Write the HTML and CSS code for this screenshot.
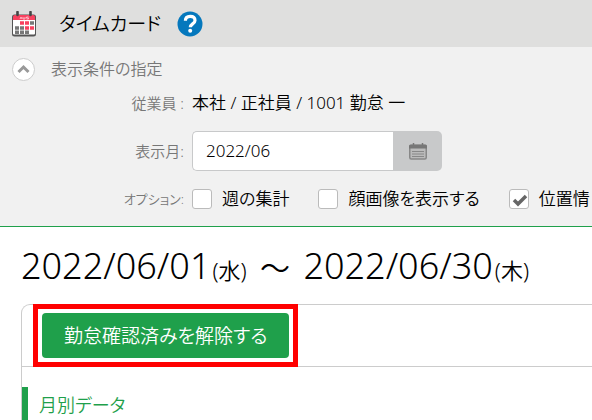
FILE: index.html
```html
<!DOCTYPE html>
<html lang="ja">

<head>
    <meta charset="UTF-8">
    <meta name="viewport" content="width=device-width, initial-scale=1.0">
    <title>タイムカード</title>
    <link rel="stylesheet" href="styles.css">
</head>

<body>

    <header class="header">
        <svg class="header-icon" viewBox="0 0 26 26" aria-hidden="true">
            <rect x="1" y="3.500" width="24" height="22" rx="2.500" fill="#555" />
            <rect x="2" y="8" width="22" height="15.500" rx="1" fill="#fff" />
            <path d="M2 9V6q0-2 2-2h18q2 0 2 2v3z" fill="#f8415f" />
            <path d="M6.500 1v3M19.500 1v3" stroke="#444" stroke-width="2.600" stroke-linecap="round" />
            <path d="M9 8l1-2 1 2M12 6v2h2V6M17.500 6h-2v1h2v1h-2" fill="none" stroke="#ffc4ce" stroke-width="0.900" />
            <path d="M9 12h4M14 12h4M14 17h4M19 17h4" stroke="#f8415f" stroke-width="3.600" />
            <path d="M19 12h4M4 17h4M9 17h4M4 21.300h4M9 21.300h4M14 21.300h4" stroke="#777" stroke-width="3.400" />
        </svg>
        <h1>タイムカード</h1>
        <a class="help" href="#" aria-label="ヘルプ">
            <svg viewBox="0 0 26 26" aria-hidden="true">
                <circle cx="13" cy="13" r="12.500" fill="#0578bd" />
                <path d="M8.400 9.800C8.400 7 10.300 5.400 13.200 5.400s4.800 1.600 4.800 4c0 3.400-4.700 3.500-4.700 6.800" fill="none" stroke="#fff" stroke-width="3.200" />
                <circle cx="13.200" cy="19.700" r="2" fill="#fff" />
            </svg>
        </a>
    </header>

    <!-- Filter conditions -->
    <form class="filters">
        <div class="filters-head">
            <button type="button" class="toggle" aria-label="閉じる">
                <svg viewBox="0 0 21 21" aria-hidden="true">
                    <path d="M5.500 13l5-5 5 5" fill="none" stroke="#999" stroke-width="3" />
                </svg>
            </button>
            <h2>表示条件の指定</h2>
        </div>

        <div class="row">
            <span class="row-label">従業員 :</span>
            <span class="employee">本社 / 正社員 / 1001 勤怠 一</span>
        </div>

        <div class="row">
            <label class="row-label" for="month">表示月:</label>
            <div class="month">
                <input type="text" id="month" name="month" value="2022/06">
                <button type="button" aria-label="カレンダー">
                    <svg viewBox="0 0 18 17" aria-hidden="true">
                        <rect x="0.750" y="2.500" width="16.500" height="13.500" rx="1.500" fill="#bbb" stroke="#888" stroke-width="1.500" />
                        <path d="M0 5.500V3q0-1.500 1.500-1.500h15Q18 1.500 18 3v2.500z" fill="#777" />
                        <path d="M4.500 0v3M13.500 0v3" stroke="#777" stroke-width="1.500" />
                        <path d="M3 8.500h12M3 11h12M3 13.500h12" stroke="#888" />
                    </svg>
                </button>
            </div>
        </div>

        <div class="row">
            <span class="row-label row-label-small">オプション:</span>
            <div class="options">
                <label><input type="checkbox" name="weekly">週の集計</label>
                <label><input type="checkbox" name="face">顔画像を表示する</label>
                <label><input type="checkbox" name="location" checked>位置情</label>
            </div>
        </div>
    </form>

    <main class="content">
        <h2 class="period">2022/06/01<small>(水)</small> <span class="tilde">～</span> 2022/06/30<small>(木)</small></h2>

        <section class="card">
            <div class="toolbar">
                <button type="button" class="btn">勤怠確認済みを解除する</button>
            </div>
            <h3 class="section-title">月別データ</h3>
        </section>
    </main>

</body>

</html>
```

FILE: styles.css
```css
* {
    margin: 0;
    padding: 0;
    box-sizing: border-box;
}

body {
    font-family: 'Noto Sans', 'Noto Sans CJK JP', sans-serif;
    font-feature-settings: 'palt';
    font-size: 16px;
    font-weight: 350;
    line-height: 24px;
    color: #000;
    background: #fff;
    overflow: hidden;
}

h1,
h2,
h3 {
    font-weight: 350;
}

button,
input {
    font: inherit;
    color: inherit;
}

svg {
    display: block;
}

/* Header */
.header {
    display: flex;
    align-items: center;
    height: 47px;
    padding: 0 11px;
    background: #dfdfde;
}

.header-icon {
    width: 26px;
    height: 26px;
}

.header h1 {
    margin-left: 22px;
    font-size: 19px;
}

.help {
    margin-left: 16px;
}

.help svg {
    width: 26px;
    height: 26px;
}

/* Filter conditions */
.filters {
    display: flex;
    flex-direction: column;
    padding: 10px 0 15px;
    background: #f1f1f1;
    border-bottom: 1px solid #1fa04b;
}

.filters-head {
    display: flex;
    align-items: center;
    gap: 16px;
    margin-bottom: 10px;
    padding-left: 12px;
    color: #777;
}

.filters-head h2 {
    font-size: 16px;
}

.toggle {
    width: 23px;
    height: 23px;
    background: #fff;
    border: 1px solid #ccc;
    border-radius: 50%;
}

.row {
    display: flex;
    align-items: center;
    gap: 8px;
    white-space: nowrap;
}

.row + .row {
    margin-top: 16px;
}

.row-label {
    flex: none;
    width: 184px;
    font-size: 15px;
    text-align: right;
    color: #777;
}

.row-label-small {
    font-size: 13px;
}

.employee {
    font-size: 17px;
}

.month {
    display: flex;
    width: 250px;
    height: 40px;
}

.month input {
    flex: 1;
    min-width: 0;
    padding: 0 13px;
    font-size: 17px;
    background: #fff;
    border: 1px solid #c8c9ca;
    border-right: 0;
    border-radius: 5px 0 0 5px;
}

.month button {
    display: flex;
    align-items: center;
    justify-content: center;
    width: 49px;
    background: #c8c9ca;
    border: 0;
    border-radius: 0 5px 5px 0;
}

.month svg {
    width: 18px;
    height: 17px;
}

.options {
    display: flex;
    gap: 29px;
}

.options label {
    display: flex;
    align-items: center;
    gap: 10px;
    font-size: 17px;
}

.options input {
    appearance: none;
    width: 20px;
    height: 20px;
    background: #fff;
    border: 1px solid #bbb;
    border-radius: 3px;
}

.options input:checked {
    background: #fff url("data:image/svg+xml,%3Csvg xmlns='http://www.w3.org/2000/svg' viewBox='0 0 18 18'%3E%3Cpath d='M4 10l4 4 8-8' fill='none' stroke='%23666' stroke-width='3.500'/%3E%3C/svg%3E") center / 18px 18px no-repeat;
}

/* Content */
.content {
    padding: 17px 0 0 21px;
}

.period {
    font-size: 36px;
    font-feature-settings: normal;
    line-height: 44px;
    white-space: nowrap;
}

.period small {
    margin-left: 2px;
    font-size: 22px;
}

.tilde {
    margin: 0 4px;
    font-size: 30px;
}

.card {
    margin-top: 12px;
    border: 1px solid #ccc;
    border-right: 0;
    border-radius: 9px 0 0 0;
}

.toolbar {
    padding: 8px 20px;
    border-bottom: 1px solid #ccc;
}

.btn {
    position: relative;
    display: block;
    height: 45px;
    padding: 0 22px;
    font-size: 19px;
    color: #fff;
    background: #1fa04b;
    border: 0;
    border-radius: 4px;
}

/* Highlight frame around the button */
.btn::after {
    content: '';
    position: absolute;
    inset: -9px;
    border: 5px solid #f00;
}

.section-title {
    margin-top: 20px;
    padding-left: 11px;
    font-size: 18px;
    line-height: 36px;
    color: #1fa04b;
    border-left: 6px solid #1fa04b;
}
```
